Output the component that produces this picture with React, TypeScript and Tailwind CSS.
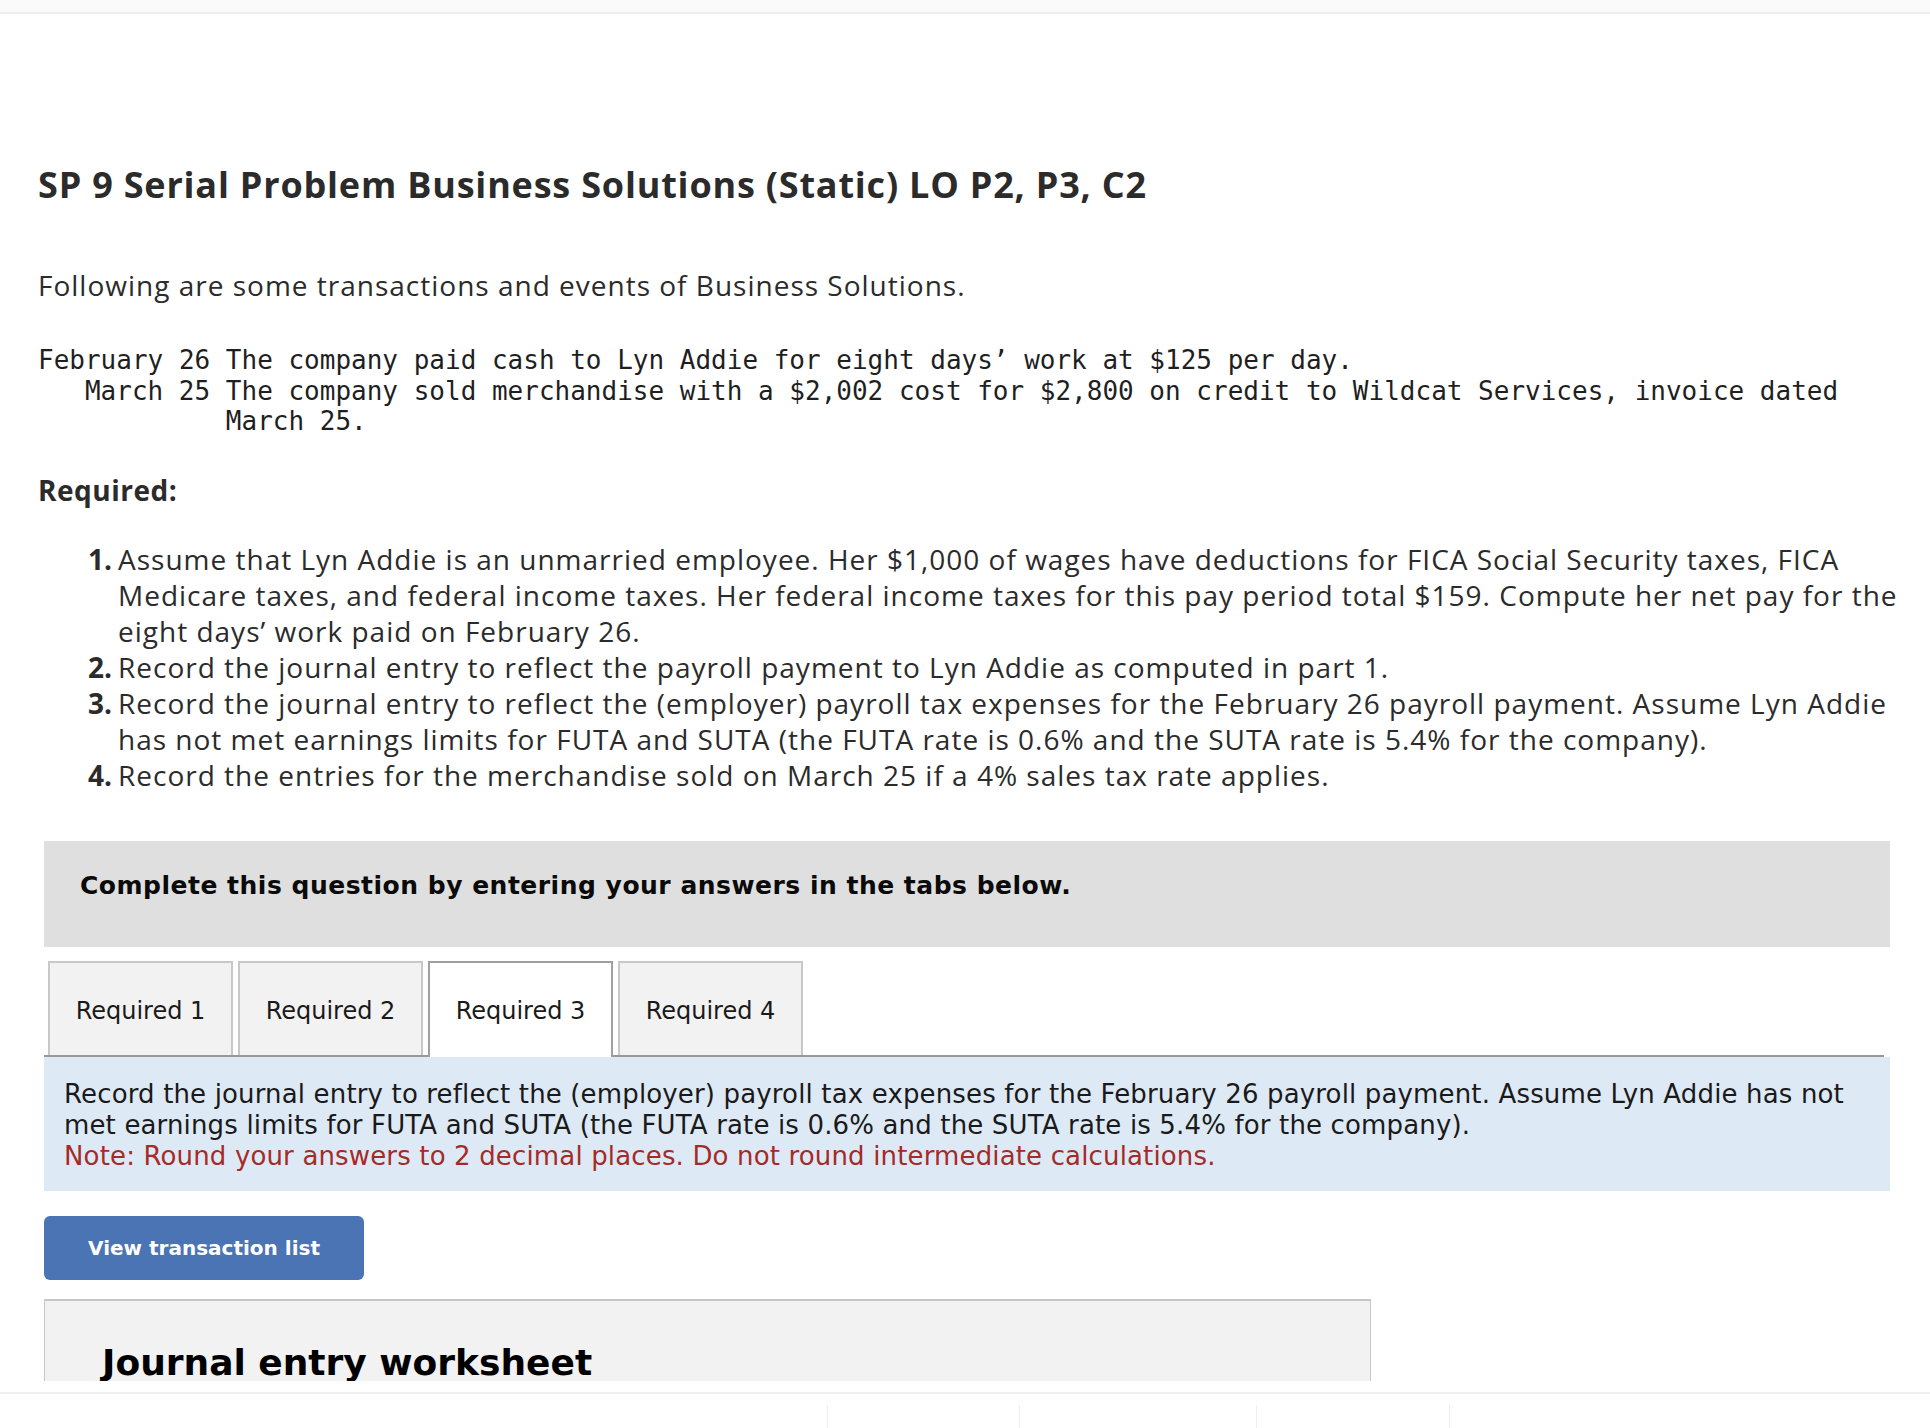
import React from 'react';

// ─── Content ──────────────────────────────────────────────────────────────────
const EVENTS: { date: string; text: string }[] = [
  { date: 'February 26', text: 'The company paid cash to Lyn Addie for eight days’ work at $125 per day.' },
  {
    date: 'March 25',
    text: 'The company sold merchandise with a $2,002 cost for $2,800 on credit to Wildcat Services, invoice dated March 25.',
  },
];

const REQUIRED: string[] = [
  'Assume that Lyn Addie is an unmarried employee. Her $1,000 of wages have deductions for FICA Social Security taxes, FICA Medicare taxes, and federal income taxes. Her federal income taxes for this pay period total $159. Compute her net pay for the eight days’ work paid on February 26.',
  'Record the journal entry to reflect the payroll payment to Lyn Addie as computed in part 1.',
  'Record the journal entry to reflect the (employer) payroll tax expenses for the February 26 payroll payment. Assume Lyn Addie has not met earnings limits for FUTA and SUTA (the FUTA rate is 0.6% and the SUTA rate is 5.4% for the company).',
  'Record the entries for the merchandise sold on March 25 if a 4% sales tax rate applies.',
];

const TABS = ['Required 1', 'Required 2', 'Required 3', 'Required 4'];
const ACTIVE_TAB = 2;

// ─── Tabs ─────────────────────────────────────────────────────────────────────
const TabBar: React.FC = () => (
  <div className="mx-[6px] mt-[14px] flex gap-[5px] border-b-2 border-[#999999] pl-[4px]">
    {TABS.map((t, i) => {
      const active = i === ACTIVE_TAB;
      return (
        <div
          key={t}
          className={
            active
              ? 'relative -mb-[2px] flex h-[96px] w-[185px] items-center justify-center border-2 border-b-0 border-[#a0a0a0] bg-white pt-[4px] pb-[2px]'
              : 'flex h-[94px] w-[185px] items-center justify-center border-2 border-b-0 border-[#c8c8c8] bg-[#f2f2f2] pt-[4px]'
          }
        >
          <span className="font-['DejaVu_Sans',sans-serif] text-[24px] text-[#1a1a1a]">{t}</span>
        </div>
      );
    })}
  </div>
);

// ─── Main ─────────────────────────────────────────────────────────────────────
const App: React.FC = () => {
  return (
    <div className="relative h-[1428px] w-full overflow-hidden bg-white">
      {/* Top strip */}
      <div className="h-[14px] border-b-2 border-[#eeeeee] bg-[#fafafa]" />

      <div className="pl-[38px] pr-[40px]">
        {/* Title */}
        <h1 className="mt-[149px] font-['Open_Sans',sans-serif] text-[36px] leading-[44px] font-bold tracking-[0.8px] text-[#2b2b2b]">
          SP 9 Serial Problem Business Solutions (Static) LO P2, P3, C2
        </h1>

        <p className="mt-[60px] font-['Open_Sans',sans-serif] text-[28px] leading-[36px] tracking-[1px] text-[#2b2b2b]">
          Following are some transactions and events of Business Solutions.
        </p>

        {/* Events */}
        <div className="mt-[42px] grid grid-cols-[auto_1fr] font-['DejaVu_Sans_Mono',monospace] text-[26px] leading-[30.5px] text-[#1f1f1f]">
          {EVENTS.map((e) => (
            <React.Fragment key={e.date}>
              <div className="text-right whitespace-nowrap">{e.date}</div>
              <div className="pl-[1ch]">{e.text}</div>
            </React.Fragment>
          ))}
        </div>

        <p className="mt-[35px] font-['Open_Sans',sans-serif] text-[28px] leading-[36px] font-bold tracking-[0.5px] text-[#2b2b2b]">
          Required:
        </p>

        <ol className="mt-[33px] -mr-[20px] font-['Open_Sans',sans-serif] text-[28px] leading-[36px] tracking-[1px] text-[#2b2b2b]">
          {REQUIRED.map((r, i) => (
            <li key={i} className="flex">
              <span className="w-[80px] shrink-0 pr-[6px] text-right font-bold tracking-normal">{i + 1}.</span>
              <span>{r}</span>
            </li>
          ))}
        </ol>
      </div>

      {/* Question block */}
      <div className="pr-[40px] pl-[44px]">
        <div className="mt-[48px] flex h-[106px] items-start bg-[#dfdfdf] pt-[30px] pl-[36px]">
          <p className="font-['DejaVu_Sans',sans-serif] text-[25px] leading-[30px] font-bold tracking-[0.5px] text-[#0a0a0a]">
            Complete this question by entering your answers in the tabs below.
          </p>
        </div>
      </div>

      <div className="pr-[40px] pl-[38px]">
        <TabBar />
      </div>

      <div className="pr-[40px] pl-[44px]">
        <div className="bg-[#dee9f6] px-[20px] pt-[22px] pb-[19px] font-['DejaVu_Sans',sans-serif] text-[26px] leading-[31px] tracking-[0.15px] text-[#1a1a1a]">
          <p>
            Record the journal entry to reflect the (employer) payroll tax expenses for the February 26 payroll payment.
            Assume Lyn Addie has not met earnings limits for FUTA and SUTA (the FUTA rate is 0.6% and the SUTA rate is
            5.4% for the company).
          </p>
          <p className="text-[#a42b27]">Note: Round your answers to 2 decimal places. Do not round intermediate calculations.</p>
        </div>

        <button className="mt-[25px] flex h-[64px] w-[320px] items-center justify-center rounded-[6px] bg-[#4a74b3] font-['DejaVu_Sans',sans-serif] text-[20px] font-bold text-white">
          View transaction list
        </button>

        <div className="mt-[19px] h-[200px] w-[1327px] border border-t-2 border-[#c6c6c6] bg-[#f2f2f2] pt-[40px] pl-[57px]">
          <h2 className="font-['DejaVu_Sans',sans-serif] text-[36px] leading-[44px] font-bold text-black">
            Journal entry worksheet
          </h2>
        </div>
      </div>

      {/* Bottom overlay bar */}
      <div className="absolute right-0 bottom-0 left-0 h-[47px] bg-white">
        <div className="mt-[11px] h-[2px] bg-[#f0f0f0]" />
        <div className="relative h-[34px]">
          <div className="absolute top-[11px] bottom-0 left-[827px] w-px bg-[#eeeeee]" />
          <div className="absolute top-[11px] bottom-0 left-[1019px] w-px bg-[#eeeeee]" />
          <div className="absolute top-[11px] bottom-0 left-[1256px] w-px bg-[#eeeeee]" />
          <div className="absolute top-[11px] bottom-0 left-[1449px] w-px bg-[#eeeeee]" />
        </div>
      </div>
    </div>
  );
};

export default App;
